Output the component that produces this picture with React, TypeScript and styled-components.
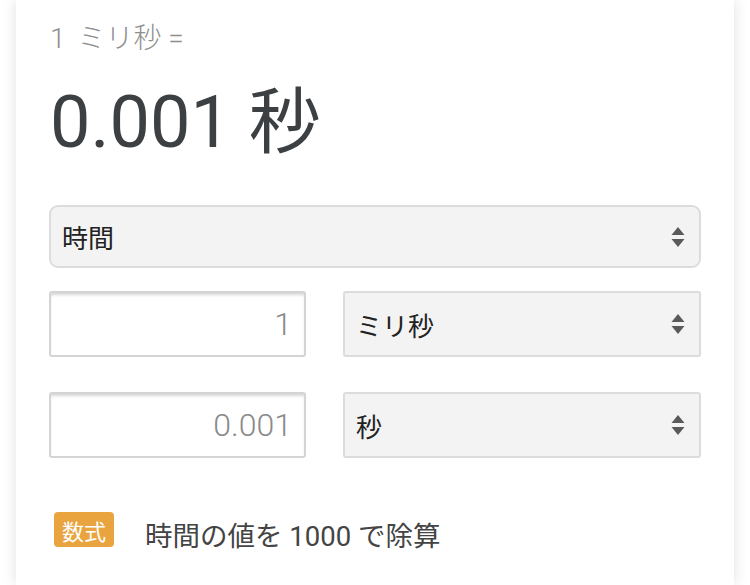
import React from 'react'
import styled, { createGlobalStyle } from 'styled-components'

const GlobalStyle = createGlobalStyle`
  html, body {
    margin: 0;
    padding: 0;
    background: #fff;
  }
  body {
    font-family: Roboto, 'Noto Sans CJK JP', sans-serif;
    overflow: hidden;
  }
`

const Page = styled.div`
  width: 750px;
  height: 585px;
  overflow: hidden;
  padding: 0 16px;
  box-sizing: border-box;
`

const Card = styled.div`
  background: #fff;
  height: 100%;
  padding: 22px 33px 0;
  box-sizing: border-box;
  box-shadow: 0 0 14px rgba(0, 0, 0, 0.12);
`

const Caption = styled.div`
  font-size: 28px;
  line-height: 33px;
  font-weight: 300;
  color: #8e8e8e;
  padding-left: 1px;
`

const Amount = styled.span`
  margin-right: 12px;
`

const Result = styled.div`
  margin-top: 25px;
  font-size: 72px;
  line-height: 86px;
  color: #3c4043;
  padding-left: 1px;
`

const Picker = styled.div<{ $rounded?: boolean }>`
  display: flex;
  align-items: center;
  justify-content: space-between;
  box-sizing: border-box;
  height: ${(p) => (p.$rounded ? '63px' : '66px')};
  padding: 0 14px 0 11px;
  background: #f3f3f3;
  border: 2px solid #dcdcdc;
  border-radius: ${(p) => (p.$rounded ? '9px' : '3px')};
  font-size: 26px;
  color: #222;
`

const CategoryPicker = styled(Picker)`
  margin-top: 39px;
`

const ConvertRow = styled.div<{ $top: number }>`
  display: grid;
  grid-template-columns: 257px 1fr;
  gap: 37px;
  margin-top: ${(p) => p.$top}px;
`

const NumberField = styled.input`
  box-sizing: border-box;
  width: 100%;
  height: 66px;
  margin: 0;
  padding: 0 12px;
  border: 2px solid #d4d4d4;
  border-radius: 3px;
  box-shadow: inset 0 3px 3px -1px rgba(0, 0, 0, 0.16);
  background: #fff;
  text-align: right;
  font-family: Roboto, sans-serif;
  font-size: 32px;
  font-weight: 300;
  color: #8a8a8a;
  outline: none;
`

const Formula = styled.div`
  display: flex;
  align-items: flex-start;
  gap: 31px;
  margin-top: 54px;
  padding-left: 5px;
`

const Badge = styled.span`
  display: inline-flex;
  align-items: center;
  justify-content: center;
  width: 60px;
  height: 35px;
  border-radius: 4px;
  background: #e9a43f;
  color: #fff;
  font-size: 22px;
`

const FormulaText = styled.span`
  margin-top: 6px;
  font-size: 27.5px;
  line-height: 38px;
  color: #444;
`

const Arrows = () => (
  <svg width="14" height="22" viewBox="0 0 14 22">
    <path d="M7 1 L13.5 9 H0.5 Z" fill="#5a5a5a" />
    <path d="M7 21 L13.5 13 H0.5 Z" fill="#5a5a5a" />
  </svg>
)

export default function App() {
  return (
    <Page>
      <GlobalStyle />
      <Card>
        <Caption>
          <Amount>1</Amount>ミリ秒 =
        </Caption>
        <Result>0.001 秒</Result>
        <CategoryPicker $rounded>
          <span>時間</span>
          <Arrows />
        </CategoryPicker>
        <ConvertRow $top={23}>
          <NumberField readOnly value="1" />
          <Picker>
            <span>ミリ秒</span>
            <Arrows />
          </Picker>
        </ConvertRow>
        <ConvertRow $top={35}>
          <NumberField readOnly value="0.001" />
          <Picker>
            <span>秒</span>
            <Arrows />
          </Picker>
        </ConvertRow>
        <Formula>
          <Badge>数式</Badge>
          <FormulaText>時間の値を 1000 で除算</FormulaText>
        </Formula>
      </Card>
    </Page>
  )
}
